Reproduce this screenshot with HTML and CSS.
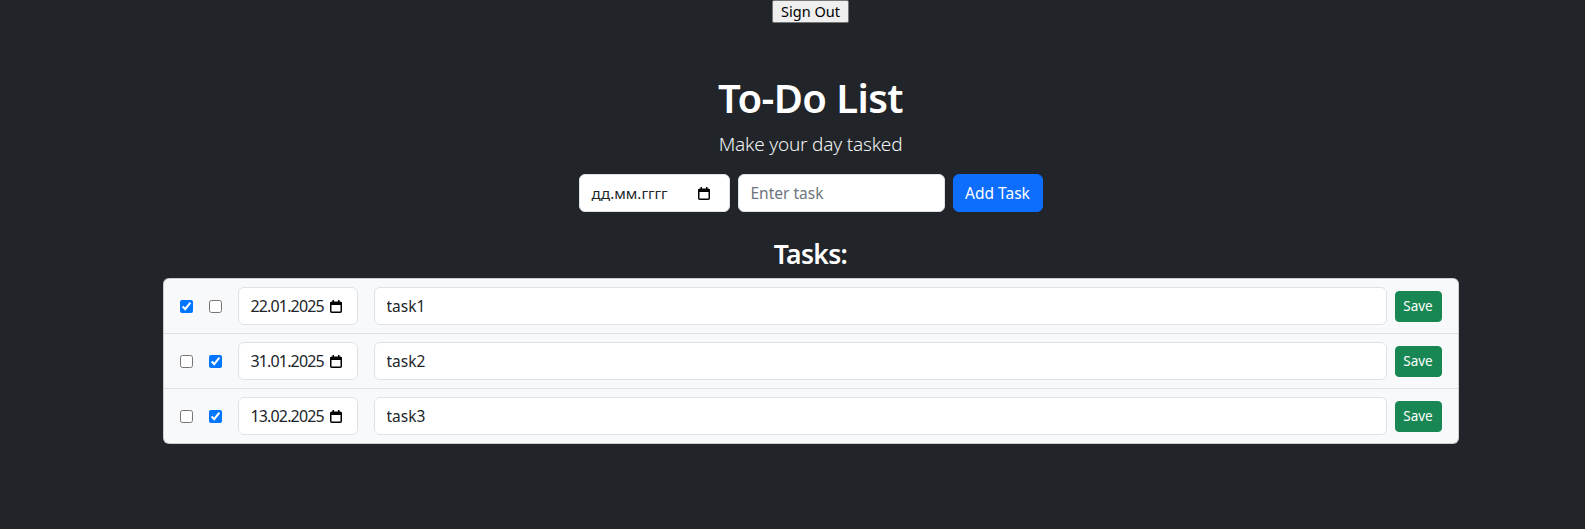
FILE: index.html
```html
<!DOCTYPE html>
<html lang="ru">
<head>
<meta charset="utf-8">
<title>To-Do List</title>
<link rel="stylesheet" href="styles.css">
</head>
<body>
<div class="page">
  <div class="topbar">
    <button class="signout" type="button">Sign Out</button>
  </div>
  <main class="container">
    <h1 class="title">To-Do List</h1>
    <p class="lead">Make your day tasked</p>
    <form class="add-form">
      <div class="date-field date-field--new">
        <span class="date-text">дд.мм.гггг</span>
        <svg class="cal" width="12" height="13" viewBox="0 0 12 13" aria-hidden="true"><rect x="0.75" y="2.25" width="10.5" height="10" rx="1" fill="none" stroke="#000" stroke-width="1.5"/><rect x="0.5" y="2" width="11" height="3" fill="#000"/><rect x="2.5" y="0" width="1.5" height="2.5" fill="#000"/><rect x="8" y="0" width="1.5" height="2.5" fill="#000"/></svg>
      </div>
      <input class="control task-new" type="text" placeholder="Enter task">
      <button class="btn btn-primary" type="button">Add Task</button>
    </form>
    <h3 class="subtitle">Tasks:</h3>
    <ul class="task-list">
      <li class="task-row">
        <input class="check" type="checkbox" checked>
        <input class="check" type="checkbox">
        <div class="date-field date-field--row">
          <span class="date-text">22.01.2025</span>
          <svg class="cal" width="12" height="13" viewBox="0 0 12 13" aria-hidden="true"><rect x="0.75" y="2.25" width="10.5" height="10" rx="1" fill="none" stroke="#000" stroke-width="1.5"/><rect x="0.5" y="2" width="11" height="3" fill="#000"/><rect x="2.5" y="0" width="1.5" height="2.5" fill="#000"/><rect x="8" y="0" width="1.5" height="2.5" fill="#000"/></svg>
        </div>
        <input class="control task-text" type="text" value="task1">
        <button class="btn btn-success btn-sm" type="button">Save</button>
      </li>
      <li class="task-row">
        <input class="check" type="checkbox">
        <input class="check" type="checkbox" checked>
        <div class="date-field date-field--row">
          <span class="date-text">31.01.2025</span>
          <svg class="cal" width="12" height="13" viewBox="0 0 12 13" aria-hidden="true"><rect x="0.75" y="2.25" width="10.5" height="10" rx="1" fill="none" stroke="#000" stroke-width="1.5"/><rect x="0.5" y="2" width="11" height="3" fill="#000"/><rect x="2.5" y="0" width="1.5" height="2.5" fill="#000"/><rect x="8" y="0" width="1.5" height="2.5" fill="#000"/></svg>
        </div>
        <input class="control task-text" type="text" value="task2">
        <button class="btn btn-success btn-sm" type="button">Save</button>
      </li>
      <li class="task-row">
        <input class="check" type="checkbox">
        <input class="check" type="checkbox" checked>
        <div class="date-field date-field--row">
          <span class="date-text">13.02.2025</span>
          <svg class="cal" width="12" height="13" viewBox="0 0 12 13" aria-hidden="true"><rect x="0.75" y="2.25" width="10.5" height="10" rx="1" fill="none" stroke="#000" stroke-width="1.5"/><rect x="0.5" y="2" width="11" height="3" fill="#000"/><rect x="2.5" y="0" width="1.5" height="2.5" fill="#000"/><rect x="8" y="0" width="1.5" height="2.5" fill="#000"/></svg>
        </div>
        <input class="control task-text" type="text" value="task3">
        <button class="btn btn-success btn-sm" type="button">Save</button>
      </li>
    </ul>
  </main>
</div>
</body>
</html>
```

FILE: styles.css
```css
* { box-sizing: border-box; }

html, body {
  margin: 0;
  background: #212529;
}

body {
  font-family: "Noto Sans", "Open Sans", sans-serif;
  color: #fff;
  font-size: 16px;
}

.page {
  margin-left: 36px;
}

.topbar {
  display: flex;
  justify-content: center;
}

.signout {
  height: 23px;
  width: 77px;
  padding: 0 4px;
  font-family: "Noto Sans", sans-serif;
  font-size: 14.5px;
  line-height: 19px;
  color: #000;
  background: #efefef;
  border: 1px solid #767676;
  border-radius: 2px;
}

.container {
  width: 1296px;
  margin: 51px auto 0;
  text-align: center;
}

.title {
  margin: 0 0 7px;
  font-size: 40px;
  font-weight: 600;
  line-height: 48px;
  letter-spacing: -0.6px;
}

.lead {
  margin: 0 0 15px;
  font-size: 19px;
  font-weight: 300;
  line-height: 30px;
  letter-spacing: -0.2px;
  color: #f1f3f5;
}

.add-form {
  display: flex;
  justify-content: center;
  gap: 8px;
  margin: 0 0 25px;
}

.control {
  height: 38px;
  padding: 0 12px;
  font-family: inherit;
  font-size: 15.5px;
  color: #212529;
  background: #fff;
  border: 1px solid #dee2e6;
  border-radius: 6px;
  outline: none;
}

.control::placeholder {
  color: #6c757d;
}

.task-new {
  width: 207px;
}

.date-field {
  display: flex;
  align-items: center;
  justify-content: space-between;
  background: #fff;
  border: 1px solid #dee2e6;
  border-radius: 6px;
  color: #212529;
}

.date-field--new {
  width: 151px;
  height: 38px;
  padding: 0 19px 0 12px;
}

.date-field--new .date-text {
  font-size: 15px;
}

.date-field--row {
  width: 120px;
  height: 38px;
  padding: 0 15px 0 12px;
  gap: 0;
}

.date-field--row .date-text {
  font-size: 16px;
  letter-spacing: -0.85px;
}

.cal {
  flex: none;
  display: block;
}

.btn {
  font-family: inherit;
  border: 1px solid transparent;
  border-radius: 6px;
  color: #fff;
  cursor: pointer;
}

.btn-primary {
  width: 90px;
  height: 38px;
  font-size: 15.5px;
  background: #0d6efd;
  border-color: #0d6efd;
}

.btn-success {
  background: #198754;
  border-color: #198754;
}

.btn-sm {
  width: 47px;
  height: 31px;
  padding: 0;
  font-size: 13.5px;
  border-radius: 4px;
}

.subtitle {
  margin: 0 0 7px;
  font-size: 26.5px;
  font-weight: 600;
  line-height: 34px;
  letter-spacing: -0.7px;
}

.task-list {
  margin: 0;
  padding: 0;
  list-style: none;
  background: #f8f9fa;
  border: 1px solid rgba(0, 0, 0, 0.175);
  border-radius: 6px;
  text-align: left;
  overflow: hidden;
}

.task-row {
  display: flex;
  align-items: center;
  gap: 16px;
  padding: 8px 16px;
}

.task-row + .task-row {
  border-top: 1px solid #dee2e6;
}

.check {
  flex: none;
  width: 13px;
  height: 13px;
  margin: 0;
}

.task-text {
  flex: 1;
  height: 38px;
}

.task-row .btn-sm {
  margin-left: -8px;
}
```
